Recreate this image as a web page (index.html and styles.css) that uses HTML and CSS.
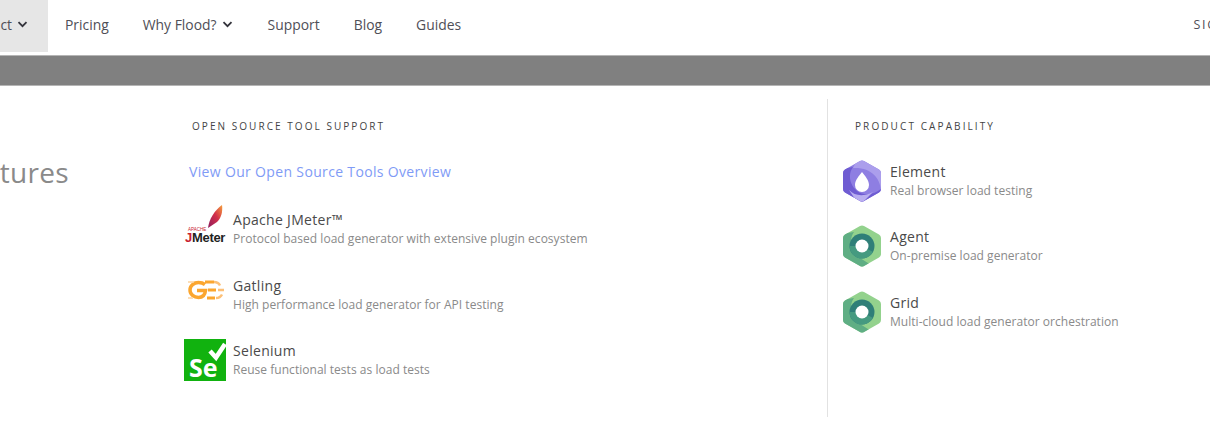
FILE: index.html
```html
<!DOCTYPE html>
<html lang="en">
<head>
  <meta charset="UTF-8" />
  <title>Flood - Product</title>
  <link rel="stylesheet" href="styles.css">
</head>
<body>
  <div class="navbar">
    <a class="nav-item nav-active" href="#">Product
      <svg class="chevron" viewBox="0 0 10 7"><path d="M1 1.200l4 4 4-4" /></svg>
    </a>
    <a class="nav-item" href="#">Pricing</a>
    <a class="nav-item" href="#">Why Flood?
      <svg class="chevron" viewBox="0 0 10 7"><path d="M1 1.200l4 4 4-4" /></svg>
    </a>
    <a class="nav-item" href="#">Support</a>
    <a class="nav-item" href="#">Blog</a>
    <a class="nav-item" href="#">Guides</a>
    <a class="nav-signin" href="#">SIGN IN</a>
  </div>

  <div class="band"></div>

  <div class="menu">
    <div class="menu-features">
      <h2>Features</h2>
    </div>

    <div class="menu-tools">
      <h3>OPEN SOURCE TOOL SUPPORT</h3>
      <a class="overview" href="#">View Our Open Source Tools Overview</a>

      <div class="item">
        <svg class="logo" viewBox="0 0 42 42">
          <defs>
            <linearGradient id="feather" x1="0" y1="1" x2="1" y2="0">
              <stop offset="0" stop-color="#8c1c5e" />
              <stop offset="0.55" stop-color="#d3304a" />
              <stop offset="1" stop-color="#f5a03c" />
            </linearGradient>
          </defs>
          <path d="M24 20C25 11 31 2 38-3c1 7-1 13-5 17-3 2-6 4-9 6z" fill="url(#feather)" />
          <text class="logo-apache" x="4" y="22.500">APACHE</text>
          <text class="logo-jmeter" x="1" y="33.500"><tspan fill="#c8202f">J</tspan>Meter</text>
        </svg>
        <div>
          <div class="item-name">Apache JMeter™</div>
          <div class="item-desc">Protocol based load generator with extensive plugin ecosystem</div>
        </div>
      </div>

      <div class="item">
        <svg class="logo" viewBox="0 0 42 42">
          <g fill="none" stroke="#fba62f" stroke-width="3.500">
            <path d="M21 10.500c-2-1.500-4-2-6.500-2C10 8.500 6 11.500 6 16s4 7.500 8.500 7.500c4 0 6.500-2.500 7-7H13" />
            <path d="M21 8h9M24 16h8M23 24h8" stroke-width="3" />
            <path d="M4 8h6M4 24h5" stroke="#fdd3a0" stroke-width="1.500" />
            <path d="M30 8c3 0 5 1.500 6 3.500M34 16h6M32 24c3 0 5-1.500 6-3.500" stroke="#fcc078" stroke-width="2.500" />
          </g>
        </svg>
        <div>
          <div class="item-name">Gatling</div>
          <div class="item-desc">High performance load generator for API testing</div>
        </div>
      </div>

      <div class="item">
        <svg class="logo" viewBox="0 0 42 42">
          <rect width="42" height="42" fill="#11b20f" />
          <path d="M26 12l6 6.500L41 5" fill="none" stroke="#fff" stroke-width="4.500" />
          <text class="logo-se" x="5" y="37.500">Se</text>
        </svg>
        <div>
          <div class="item-name">Selenium</div>
          <div class="item-desc">Reuse functional tests as load tests</div>
        </div>
      </div>
    </div>

    <div class="menu-products">
      <h3>PRODUCT CAPABILITY</h3>

      <div class="item product">
        <svg class="hex" viewBox="0 0 38 42">
          <defs>
            <clipPath id="hex-shape">
              <path d="M17 1Q19 0 21 1L36 9.500Q38 10.500 38 13V29Q38 31.500 36 32.500L21 41Q19 42 17 41L2 32.500Q0 31.500 0 29V13Q0 10.500 2 9.500Z" />
            </clipPath>
          </defs>
          <g clip-path="url(#hex-shape)">
            <rect width="38" height="42" fill="#8e7ee2" />
            <path d="M14 0h24v30C37 18 28 7 10 8z" fill="#ab9eec" />
            <path d="M-1 9l11-2C5 14 6 24 14 31c7 5 16 4 24-2v4L20 43H14L-1 33z" fill="#6f5cd2" />
            <path d="M6 30c6 6 14 7 24 2l-10 10H14z" fill="#b9aef0" />
          </g>
          <path d="M19 12c3 4 7 8 7 13a7 7 0 0 1-14 0c0-5 4-9 7-13z" fill="#fff" />
        </svg>
        <div>
          <div class="item-name">Element</div>
          <div class="item-desc">Real browser load testing</div>
        </div>
      </div>

      <div class="item product">
        <svg class="hex" viewBox="0 0 38 42">
          <use href="#green-hex" />
        </svg>
        <div>
          <div class="item-name">Agent</div>
          <div class="item-desc">On-premise load generator</div>
        </div>
      </div>

      <div class="item product">
        <svg class="hex" viewBox="0 0 38 42">
          <defs>
            <g id="green-hex">
              <g clip-path="url(#hex-shape)">
                <rect width="38" height="42" fill="#93d28d" />
                <path d="M-1 9l12-2c-5 7-4 18 3 24l14 9-6 3H14L-1 33z" fill="#5fae84" />
                <circle cx="19" cy="21" r="12.500" fill="#2f7f78" />
                <path d="M6.500 21a12.500 12.500 0 0 0 23.500 6L19 21z" fill="#459a80" />
              </g>
              <circle cx="19" cy="21" r="6.500" fill="#fff" />
            </g>
          </defs>
          <use href="#green-hex" />
        </svg>
        <div>
          <div class="item-name">Grid</div>
          <div class="item-desc">Multi-cloud load generator orchestration</div>
        </div>
      </div>
    </div>
  </div>
</body>
</html>
```

FILE: styles.css
```css
html, body {
  margin: 0;
  padding: 0;
  height: 423px;
  overflow: hidden;
}

body {
  font-family: 'Open Sans', sans-serif;
  background: #fff;
  color: #444;
}

a {
  text-decoration: none;
}

.navbar {
  display: flex;
  align-items: flex-start;
  height: 55px;
  margin-left: -60px;
  width: 1270px;
}

.nav-item {
  display: flex;
  align-items: center;
  gap: 5px;
  height: 52px;
  box-sizing: border-box;
  padding: 0 17px 3px;
  font-size: 13.900px;
  color: #4f4f57;
  white-space: nowrap;
}

.nav-active {
  background: #e6e6e6;
  width: 108px;
  justify-content: flex-end;
  padding-right: 20px;
}

.chevron {
  width: 11px;
  height: 7px;
  margin-right: 1px;
  fill: none;
  stroke: #33333b;
  stroke-width: 1.800;
}

.nav-active .chevron {
  margin-right: 0;
}

.nav-signin {
  margin-left: auto;
  height: 50px;
  line-height: 50px;
  font-size: 12.500px;
  letter-spacing: 1.800px;
  color: #4f4f57;
  white-space: nowrap;
  margin-right: -41px;
}

.band {
  height: 29px;
  background: #808080;
  border-top: 1px solid #b5b5b5;
  border-bottom: 1px solid #b5b5b5;
}

.menu {
  display: grid;
  grid-template-columns: 184px 643px 1fr;
  height: 318px;
  margin-top: 13px;
}

.menu-features {
  overflow: hidden;
}

.menu-features h2 {
  margin: 54px 0 0 -47px;
  font-size: 28px;
  line-height: 38px;
  font-weight: 400;
  color: #8a8a8a;
  letter-spacing: 0.300px;
}

.menu-products {
  border-left: 1px solid #e2e2e2;
  padding-left: 15px;
}

h3 {
  margin: 20px 0 0 8px;
  font-size: 10px;
  line-height: 14px;
  font-weight: 500;
  letter-spacing: 2.050px;
  color: #444;
}

.menu-products h3 {
  margin-left: 12px;
  letter-spacing: 2.100px;
}

.overview {
  display: block;
  margin: 29px 0 0 5px;
  font-size: 14px;
  line-height: 20px;
  color: #7f9bf6;
  letter-spacing: 0.340px;
}

.item {
  display: flex;
  align-items: center;
  gap: 7px;
  height: 42px;
  margin-top: 23.700px;
}

.menu-tools .item:first-of-type {
  margin-top: 26px;
}

.product {
  gap: 9px;
  margin-top: 23.500px;
}

.product:first-of-type {
  margin-top: 26.500px;
}

.logo {
  width: 42px;
  height: 42px;
  flex: none;
  overflow: visible;
}

.logo-apache {
  font-size: 4.500px;
  fill: #c8202f;
  font-family: 'Liberation Sans', sans-serif;
}

.logo-jmeter {
  font-size: 13px;
  font-weight: 700;
  letter-spacing: -0.300px;
  fill: #222;
  font-family: 'Liberation Sans', sans-serif;
}

.logo-se {
  font-size: 25px;
  font-weight: 700;
  fill: #fff;
  font-family: 'Open Sans', sans-serif;
}

.hex {
  width: 38px;
  height: 42px;
  flex: none;
}

.item-name {
  font-size: 14px;
  line-height: 19px;
  color: #4a4a4a;
  letter-spacing: 0.300px;
}

.item-desc {
  font-size: 12px;
  line-height: 19px;
  color: #8a8a8a;
  letter-spacing: 0.030px;
}
```
